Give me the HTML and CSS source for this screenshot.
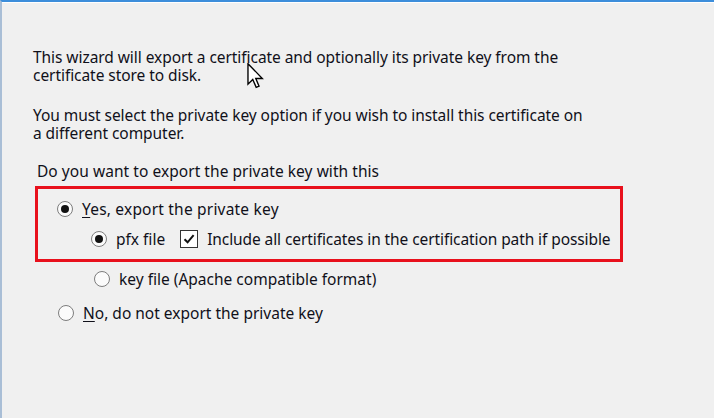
FILE: index.html
```html
<!DOCTYPE html>
<html>
<head>
<meta charset="utf-8">
<link rel="stylesheet" href="styles.css">
</head>
<body>
<div class="frame">
  <div class="content">
    <div class="intro"><div class="line">This wizard will export a certificate and optionally its private key from the</div><div class="line">certificate store to disk.</div></div>
    <div class="intro second"><div class="line">You must select the private key option if you wish to install this certificate on</div><div class="line">a different computer.</div></div>
    <p class="question">Do you want to export the private key with this</p>
    <div class="highlight">
      <div class="row lvl1"><span class="radio on"></span><span class="label wide"><u>Y</u>es, export the private key</span></div>
      <div class="row lvl2"><span class="radio on"></span><span class="label">pfx file</span><span class="check"><svg viewBox="0 0 12 12" width="12" height="12"><path d="M1.5 6.2 L4.6 9.3 L10.6 2.2" fill="none" stroke="#111" stroke-width="2"/></svg></span><span class="label narrow">Include all certificates in the certification path if possible</span></div>
    </div>
    <div class="row lvl2 after"><span class="radio"></span><span class="label">key file (Apache compatible format)</span></div>
    <div class="row lvl1 last"><span class="radio"></span><span class="label"><u>N</u>o, do not export the private key</span></div>
  </div>
  <svg class="cursor" viewBox="0 0 12 19" width="17" height="26"><path d="M0.5 0.5 L0.5 15.5 L4 12 L6.5 17.8 L8.6 16.9 L6.2 11.3 L11 11.3 Z" fill="#fff" stroke="#000" stroke-width="1" stroke-linejoin="miter"/></svg>
</div>
</body>
</html>
```

FILE: styles.css
```css
html, body {
  margin: 0;
  padding: 0;
  width: 714px;
  height: 418px;
  overflow: hidden;
  background: #f0f0f0;
}
.frame {
  position: relative;
  box-sizing: border-box;
  width: 714px;
  height: 418px;
  border-top: 2px solid #3d8edb;
  border-left: 2px solid #a9bed6;
  background: #f0f0f0;
  box-shadow: inset 0 1px 0 #ffffff;
  font-family: "Noto Sans", sans-serif;
  color: #10101a;
}
.content {
  padding: 46px 0 0 31px;
}
p { margin: 0; }
.intro {
  font-size: 15.5px;
  letter-spacing: -0.06px;
}
.line {
  height: 18px;
  line-height: 18px;
  white-space: nowrap;
}
.second { margin-top: 22px; }
.question {
  margin-top: 20px;
  margin-left: 4px;
  font-size: 15.5px;
  line-height: 18px;
  letter-spacing: 0.05px;
}
.highlight {
  margin-top: 6px;
  margin-left: 2px;
  width: 582px;
  height: 70px;
  border: 3px solid #e8101c;
  box-sizing: content-box;
}
.row {
  display: flex;
  align-items: center;
  height: 20px;
  font-size: 15.5px;
}
.highlight .lvl1 { margin-left: 19px; margin-top: 10px; }
.highlight .lvl2 { margin-left: 53px; margin-top: 10px; }
.row.after { margin-left: 61px; margin-top: 7px; }
.row.last { margin-left: 25px; margin-top: 14px; }
.radio {
  box-sizing: border-box;
  width: 16px;
  height: 16px;
  border-radius: 50%;
  border: 1.5px solid #7d7d7d;
  background: #fbfbfb;
  display: flex;
  align-items: center;
  justify-content: center;
  margin-right: 9px;
  flex: none;
}
.radio.on::after {
  content: "";
  width: 8px;
  height: 8px;
  border-radius: 50%;
  background: #111;
}
.label { white-space: nowrap; }
.wide { letter-spacing: 0.2px; }
.label u { text-decoration-thickness: 1px; text-underline-offset: 2px; }
.check {
  box-sizing: border-box;
  width: 18px;
  height: 18px;
  border: 1.5px solid #333;
  background: #fff;
  display: flex;
  align-items: center;
  justify-content: center;
  margin-left: 15px;
  margin-right: 9px;
  flex: none;
}
.narrow { letter-spacing: -0.09px; }
.cursor {
  position: absolute;
  left: 245px;
  top: 61px;
}
```
